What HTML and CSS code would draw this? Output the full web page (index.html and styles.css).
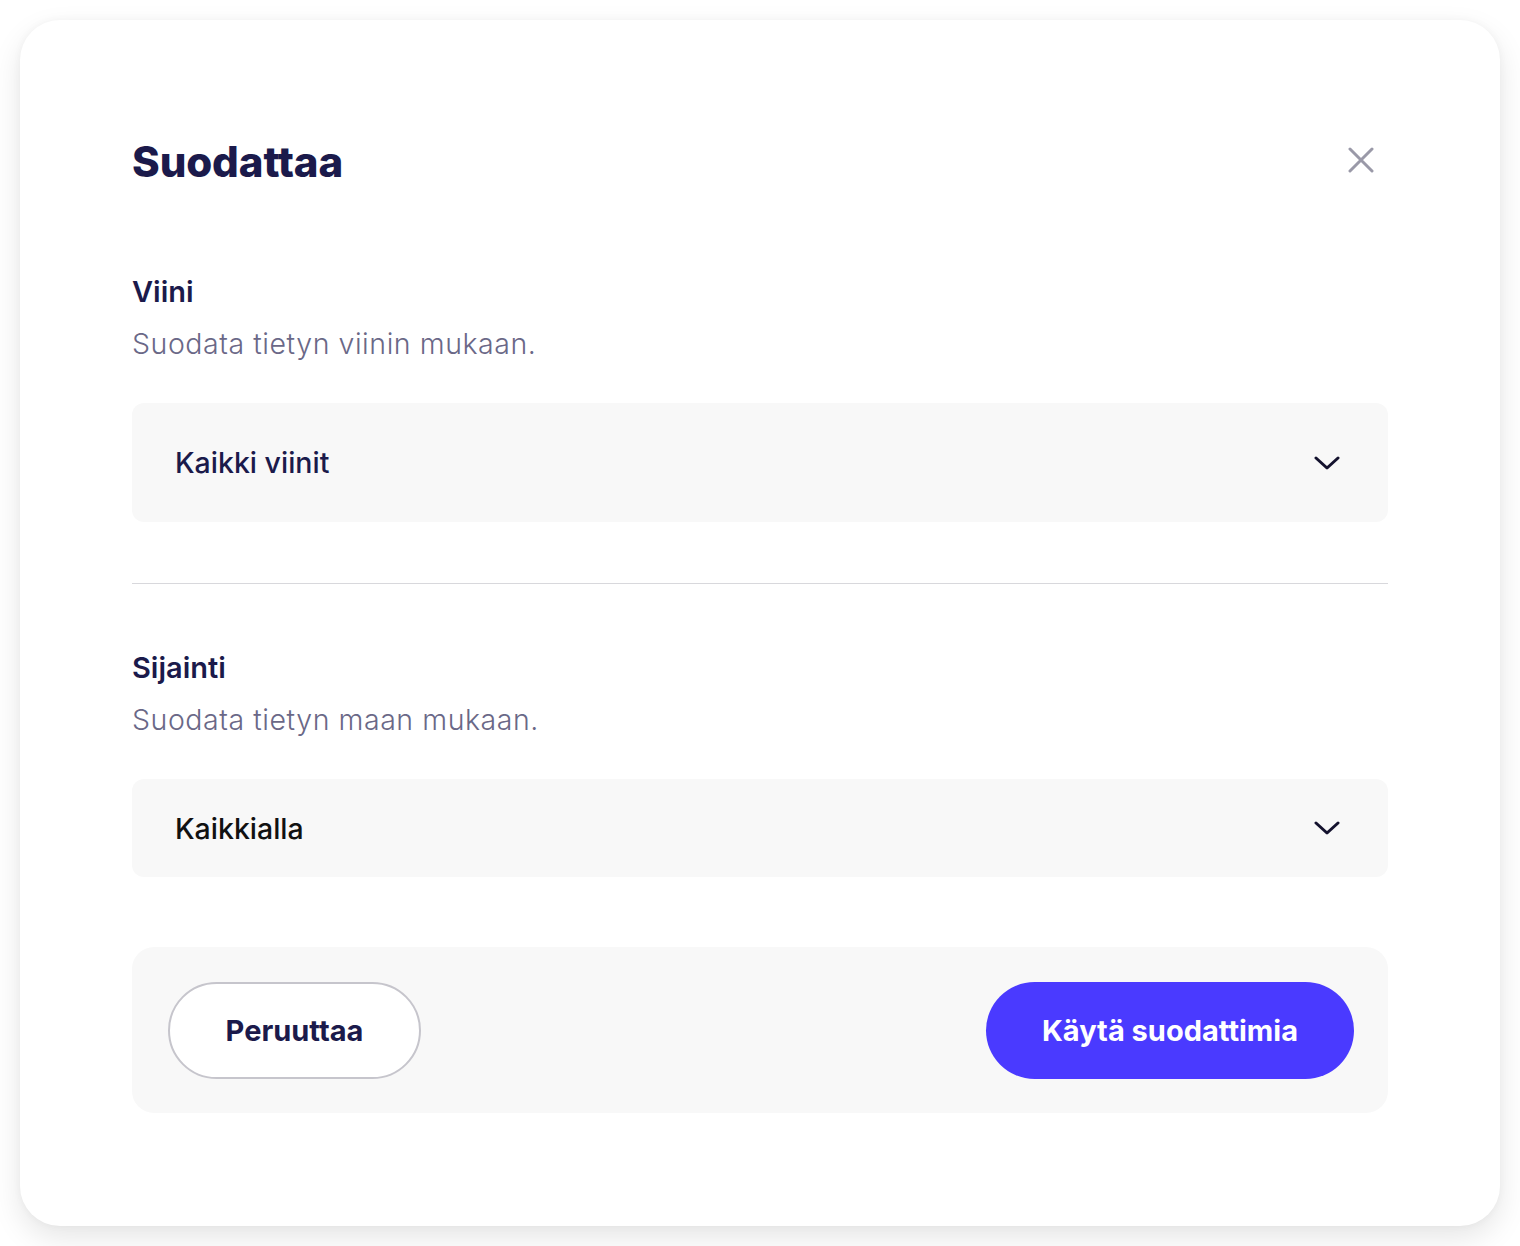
FILE: index.html
```html
<!DOCTYPE html>
<html lang="fi">
<head>
  <meta charset="UTF-8" />
  <title>Suodattaa</title>
  <link rel="stylesheet" href="styles.css">
</head>
<body>
  <div class="modal">
    <div class="modal-head">
      <h1>Suodattaa</h1>
      <button class="close" aria-label="Sulje">
        <svg width="26" height="26" viewBox="0 0 26 26" fill="none" stroke="#9a99a8" stroke-width="3" stroke-linecap="round">
          <path d="M2 2 L24 24 M24 2 L2 24" />
        </svg>
      </button>
    </div>

    <div class="group">
      <div class="label">Viini</div>
      <div class="hint">Suodata tietyn viinin mukaan.</div>
      <div class="select select-tall">
        <span>Kaikki viinit</span>
        <svg width="26" height="16" viewBox="0 0 26 16" fill="none" stroke="#14122e" stroke-width="3" stroke-linecap="round" stroke-linejoin="round">
          <path d="M2 3 L13 13 L24 3" />
        </svg>
      </div>
    </div>

    <hr class="divider" />

    <div class="group group-second">
      <div class="label">Sijainti</div>
      <div class="hint">Suodata tietyn maan mukaan.</div>
      <div class="select">
        <span class="plain">Kaikkialla</span>
        <svg width="26" height="16" viewBox="0 0 26 16" fill="none" stroke="#14122e" stroke-width="3" stroke-linecap="round" stroke-linejoin="round">
          <path d="M2 3 L13 13 L24 3" />
        </svg>
      </div>
    </div>

    <div class="actions">
      <button class="btn btn-ghost">Peruuttaa</button>
      <button class="btn btn-primary">Käytä suodattimia</button>
    </div>
  </div>
</body>
</html>
```

FILE: styles.css
```css
body {
  margin: 0;
  padding: 20px;
  background-color: #fff;
  font-family: "Inter", "Noto Sans", sans-serif;
  color: #1b1a4b;
}
.modal {
  background: #fff;
  border-radius: 40px;
  box-shadow: 0 12px 30px rgba(0,0,0,0.10), 0 0 8px rgba(0,0,0,0.04);
  padding: 117px 112px 113px;
  box-sizing: border-box;
  width: 1480px;
  height: 1206px;
}
.modal-head {
  display: flex;
  justify-content: space-between;
  align-items: center;
  height: 50px;
}
h1 {
  margin: 0;
  font-size: 42px;
  font-weight: 800;
  letter-spacing: -0.1px;
  line-height: 50px;
}
.close {
  background: none;
  border: none;
  padding: 0;
  margin: 0 14px 4px 0;
  width: 26px;
  height: 26px;
  cursor: pointer;
}
.group {
  margin-top: 85px;
}
.group-second {
  margin-top: 64px;
}
.label {
  font-size: 29px;
  font-weight: 600;
  line-height: 40px;
}
.hint {
  margin-top: 10px;
  font-size: 28.5px;
  font-weight: 300;
  letter-spacing: 0.55px;
  line-height: 44px;
  color: #6a6887;
}
.select {
  margin-top: 37px;
  height: 98px;
  background: #f8f8f8;
  border-radius: 12px;
  display: flex;
  align-items: center;
  justify-content: space-between;
  padding: 0 48px 0 43px;
  font-size: 28.5px;
  font-weight: 500;
}
.select-tall {
  height: 119px;
}
.select .plain {
  color: #111;
}
.divider {
  margin: 61px 0 0;
  border: none;
  border-top: 1px solid #d8d8dc;
}
.actions {
  margin-top: 70px;
  background: #f8f8f8;
  border-radius: 22px;
  height: 166px;
  box-sizing: border-box;
  padding: 0 34px 0 36px;
  display: flex;
  align-items: center;
  justify-content: space-between;
}
.btn {
  height: 97px;
  border-radius: 49px;
  font-family: inherit;
  font-size: 29px;
  font-weight: 700;
  cursor: pointer;
}
.btn-ghost {
  width: 253px;
  background: #fff;
  border: 2px solid #c6c5cc;
  color: #1b1a4b;
}
.btn-primary {
  width: 368px;
  background: #4a3aff;
  border: none;
  color: #fff;
}
```
